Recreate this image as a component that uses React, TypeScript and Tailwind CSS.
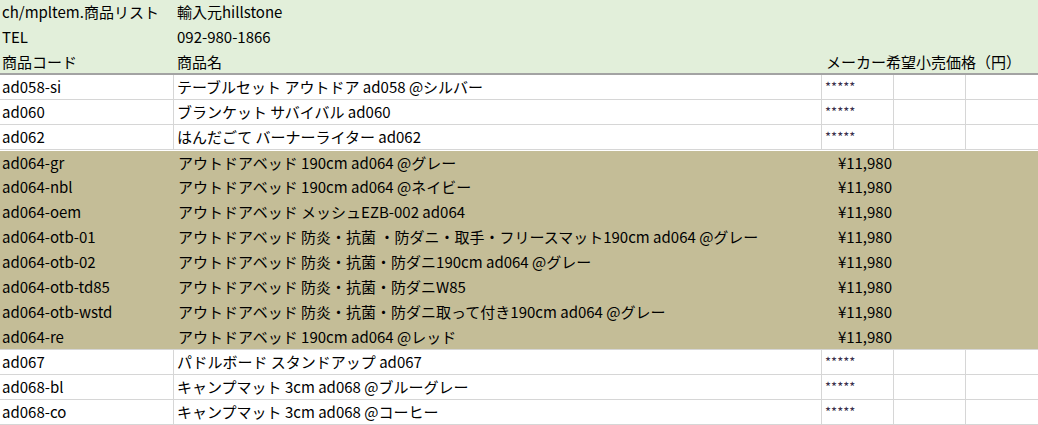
import React from "react";

const cols = "grid grid-cols-[174px_648px_72px_72px_72px]";

type Row = { code: string; name: string; price?: string };

const top: Row[] = [
  { code: "ad058-si", name: "テーブルセット アウトドア ad058 @シルバー" },
  { code: "ad060", name: "ブランケット サバイバル ad060" },
  { code: "ad062", name: "はんだごて バーナーライター ad062" },
];

const tan: Row[] = [
  { code: "ad064-gr", name: "アウトドアベッド 190cm ad064 @グレー", price: "¥11,980" },
  { code: "ad064-nbl", name: "アウトドアベッド 190cm ad064 @ネイビー", price: "¥11,980" },
  { code: "ad064-oem", name: "アウトドアベッド メッシュEZB-002 ad064", price: "¥11,980" },
  { code: "ad064-otb-01", name: "アウトドアベッド 防炎・抗菌 ・防ダニ・取手・フリースマット190cm ad064 @グレー", price: "¥11,980" },
  { code: "ad064-otb-02", name: "アウトドアベッド 防炎・抗菌・防ダニ190cm ad064 @グレー", price: "¥11,980" },
  { code: "ad064-otb-td85", name: "アウトドアベッド 防炎・抗菌・防ダニW85", price: "¥11,980" },
  { code: "ad064-otb-wstd", name: "アウトドアベッド 防炎・抗菌・防ダニ取って付き190cm ad064 @グレー", price: "¥11,980" },
  { code: "ad064-re", name: "アウトドアベッド 190cm ad064 @レッド", price: "¥11,980" },
];

const bottom: Row[] = [
  { code: "ad067", name: "パドルボード スタンドアップ ad067" },
  { code: "ad068-bl", name: "キャンプマット 3cm ad068 @ブルーグレー" },
  { code: "ad068-co", name: "キャンプマット 3cm ad068 @コーヒー" },
];

function WhiteRow({ r }: { r: Row }) {
  const cell = "h-[25px] pb-[2px] border-b border-r border-[#d6d6d6] flex items-center whitespace-nowrap overflow-visible";
  return (
    <div className={`${cols} bg-white`}>
      <div className={`${cell} pl-[2px]`}>{r.code}</div>
      <div className={`${cell} pl-[3px]`}>{r.name}</div>
      <div className={`${cell} pl-[3px] text-[13px] text-[#3a2f4a]`}>*****</div>
      <div className={cell}></div>
      <div className={`h-[25px] border-b border-[#d6d6d6]`}></div>
    </div>
  );
}

function TanRow({ r, first, last }: { r: Row; first?: boolean; last?: boolean }) {
  const h = first ? "h-[25px] border-t border-white" : last ? "h-[25px] border-b border-[#d6d6d6]" : "h-[25px]";
  return (
    <div className={`${cols} bg-[#c4bd97] ${h}`}>
      <div className="flex items-center pb-[2px] pl-[2px] whitespace-nowrap">{r.code}</div>
      <div className="flex items-center pb-[2px] pl-[4px] whitespace-nowrap">{r.name}</div>
      <div className="flex items-center pb-[2px] justify-end pr-[2px] whitespace-nowrap">{r.price}</div>
      <div></div>
      <div></div>
    </div>
  );
}

export default function App() {
  return (
    <div
      className="w-[1038px] h-[425px] overflow-hidden bg-white text-[15px] text-black leading-none"
      style={{ fontFamily: '"Noto Sans CJK JP", "Noto Sans", sans-serif' }}
    >
      <div className="bg-[#e2efda]">
        <div className={`${cols} h-[25px]`}>
          <div className="flex items-center pb-[2px] pl-[2px] whitespace-nowrap">ch/mpltem.商品リスト</div>
          <div className="flex items-center pb-[2px] pl-[3px] whitespace-nowrap">輸入元hillstone</div>
          <div></div>
          <div></div>
          <div></div>
        </div>
        <div className={`${cols} h-[25px]`}>
          <div className="flex items-center pb-[2px] pl-[2px]">TEL</div>
          <div className="flex items-center pb-[2px] pl-[3px]">092-980-1866</div>
          <div></div>
          <div></div>
          <div></div>
        </div>
        <div className={`${cols} h-[25px] border-b-2 border-[#a3a3a3]`}>
          <div className="flex items-center pb-[1px] pl-[2px]">商品コード</div>
          <div className="flex items-center pb-[1px] pl-[3px]">商品名</div>
          <div className="flex items-center pb-[1px] pl-[4px] whitespace-nowrap">メーカー希望小売価格（円）</div>
          <div></div>
          <div></div>
        </div>
      </div>
      {top.map((r) => (
        <WhiteRow key={r.code} r={r} />
      ))}
      {tan.map((r, i) => (
        <TanRow key={r.code} r={r} first={i === 0} last={i === tan.length - 1} />
      ))}
      {bottom.map((r) => (
        <WhiteRow key={r.code} r={r} />
      ))}
    </div>
  );
}
